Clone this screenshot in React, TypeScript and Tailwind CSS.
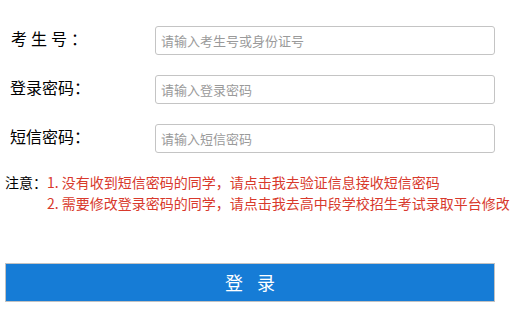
import React, { useState } from 'react';

const fontStack = { fontFamily: '"Microsoft YaHei", "Noto Sans CJK SC", "Noto Sans", sans-serif' };

interface FieldProps {
  label: React.ReactNode;
  placeholder: string;
  type?: string;
  value: string;
  onChange: (v: string) => void;
}

const Field: React.FC<FieldProps> = ({ label, placeholder, type = 'text', value, onChange }) => (
  <div className="flex items-start">
    <label className="w-[150px] shrink-0 pl-[5px] text-[16px] leading-[24px] text-black">{label}</label>
    <input
      type={type}
      value={value}
      onChange={(e) => onChange(e.target.value)}
      placeholder={placeholder}
      className="h-[29px] w-[340px] rounded-[3px] border border-[#c4c4c4] bg-white px-[5px] text-[13px] text-[#333] outline-none placeholder:text-[#9a9a9a]"
    />
  </div>
);

export default function App() {
  const [ksh, setKsh] = useState('');
  const [pwd, setPwd] = useState('');
  const [sms, setSms] = useState('');

  return (
    <div className="min-h-[319px] w-[517px] bg-white px-[5px] pt-[26px]" style={fontStack}>
      <div className="flex flex-col gap-[20px]">
        <Field
          label={<span className="pl-px tracking-[4px]">考生号：</span>}
          placeholder="请输入考生号或身份证号"
          value={ksh}
          onChange={setKsh}
        />
        <Field label="登录密码：" placeholder="请输入登录密码" type="password" value={pwd} onChange={setPwd} />
        <Field label="短信密码：" placeholder="请输入短信密码" value={sms} onChange={setSms} />
      </div>

      <div className="mt-[19px] flex text-[14px] leading-[21px]">
        <span className="shrink-0 text-black">注意：</span>
        <div className="whitespace-nowrap text-[#d8392c]">
          <p>1. 没有收到短信密码的同学，请点击我去验证信息接收短信密码</p>
          <p>2. 需要修改登录密码的同学，请点击我去高中段学校招生考试录取平台修改</p>
        </div>
      </div>

      <button
        type="button"
        className="mt-[49px] flex h-[39px] w-[490px] items-center justify-center border border-[#c2c2c2] bg-[#167cd6] text-[18px] text-white"
      >
        <span>登</span>
        <span className="ml-[14px]">录</span>
      </button>
    </div>
  );
}
